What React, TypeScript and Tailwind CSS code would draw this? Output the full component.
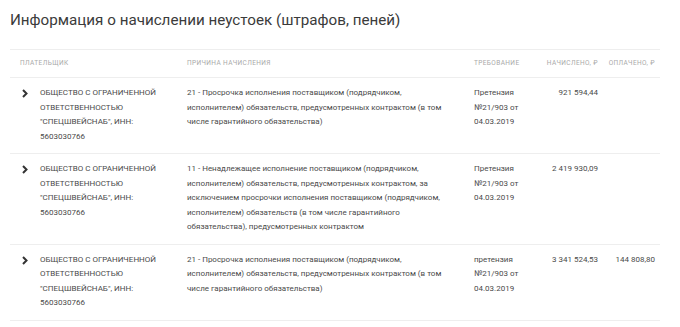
import React from 'react';

interface Row {
  payer: string;
  reason: string;
  claim: string;
  accrued: string;
  paid: string;
}

const payer = 'ОБЩЕСТВО С ОГРАНИЧЕННОЙ ОТВЕТСТВЕННОСТЬЮ "СПЕЦШВЕЙСНАБ", ИНН: 5603030766';

const rows: Row[] = [
  {
    payer,
    reason:
      '21 - Просрочка исполнения поставщиком (подрядчиком, исполнителем) обязательств, предусмотренных контрактом (в том числе гарантийного обязательства)',
    claim: 'Претензия №21/903 от 04.03.2019',
    accrued: '921 594,44',
    paid: '',
  },
  {
    payer,
    reason:
      '11 - Ненадлежащее исполнение поставщиком (подрядчиком, исполнителем) обязательств, предусмотренных контрактом, за исключением просрочки исполнения поставщиком (подрядчиком, исполнителем) обязательств (в том числе гарантийного обязательства), предусмотренных контрактом',
    claim: 'Претензия №21/903 от 04.03.2019',
    accrued: '2 419 930,09',
    paid: '',
  },
  {
    payer,
    reason:
      '21 - Просрочка исполнения поставщиком (подрядчиком, исполнителем) обязательств, предусмотренных контрактом (в том числе гарантийного обязательства)',
    claim: 'претензия №21/903 от 04.03.2019',
    accrued: '3 341 524,53',
    paid: '144 808,80',
  },
];

const grid = 'grid grid-cols-[20px_147px_287px_64px_60px_57px] pl-[10px] pr-[5px]';

const Chevron = () => (
  <svg width="8" height="9" viewBox="0 0 8 9" className="mt-[3px] ml-[1px]">
    <polyline points="2,1 5.5,4.5 2,8" fill="none" stroke="#333" strokeWidth="2" />
  </svg>
);

export default function App() {
  return (
    <div className="w-[680px] h-[327px] bg-white overflow-hidden font-['Roboto',sans-serif]">
      <h1 className="pl-[10px] pt-[9px] text-[15.2px] leading-[22px] text-[#3b3b3b] font-normal">
        Информация о начислении неустоек (штрафов, пеней)
      </h1>
      <div className="mx-[10px] mt-[18px] w-[650px]">
        <div className={`${grid} h-[29px] items-center border-t border-b border-[#eeeeee] text-[6.5px] tracking-[0.4px] text-[#a9a9a9] uppercase`}>
          <div className="col-span-2">Плательщик</div>
          <div>Причина начисления</div>
          <div>Требование</div>
          <div className="text-right">Начислено, ₽</div>
          <div className="text-right">Оплачено, ₽</div>
        </div>
        {rows.map((r, i) => (
          <div
            key={i}
            className={`${grid} pt-[8px] pb-[9px] border-b border-[#eeeeee] text-[8px] leading-[14.5px] text-[#4a4a4a]`}
          >
            <div>
              <Chevron />
            </div>
            <div className="pr-[12px]">{r.payer}</div>
            <div className="pr-[22px]">{r.reason}</div>
            <div className="pr-[6px]">{r.claim}</div>
            <div className="text-right">{r.accrued}</div>
            <div className="text-right">{r.paid}</div>
          </div>
        ))}
      </div>
    </div>
  );
}
